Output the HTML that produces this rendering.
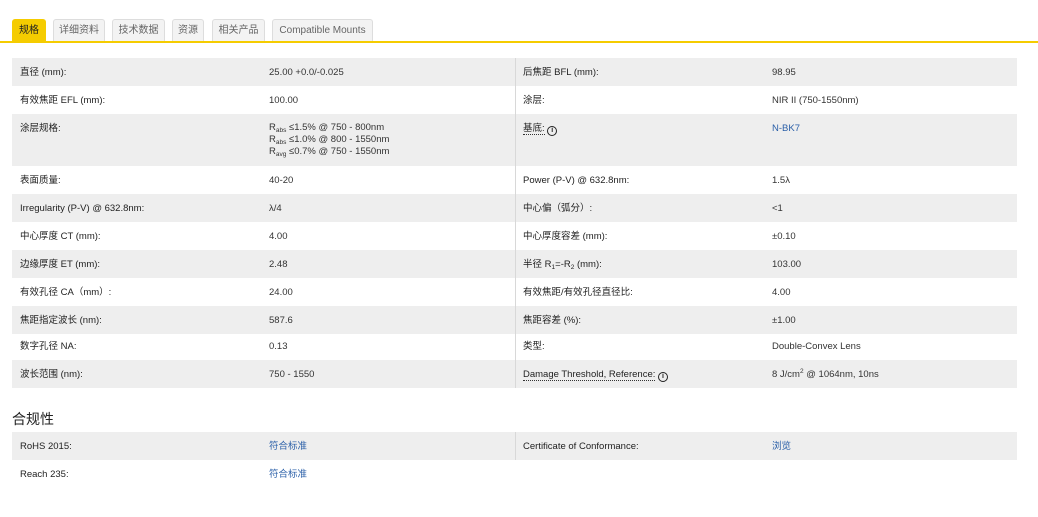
<!DOCTYPE html>
<html><head><meta charset="utf-8"><style>
*{margin:0;padding:0;box-sizing:border-box}
body{width:1038px;height:517px;background:#fff;font-family:"Liberation Sans","Noto Sans CJK SC",sans-serif;font-size:9.5px;color:#333;position:relative;overflow:hidden}
.tab{position:absolute;top:19px;height:23px;border:1px solid #ddd;border-bottom:none;border-radius:3px 3px 0 0;background:#f3f3f3;color:#666;font-size:10px;line-height:22px;text-align:center}
.tab.a{background:#f5cc00;border-color:#f5cc00;color:#222}
.line{position:absolute;left:0;top:41px;width:1038px;height:2px;background:#f5cc00}
.r{position:absolute;left:12px;width:1005px}
.g{background:#eeeeee}
.c{position:absolute;top:9px;line-height:12px;white-space:nowrap}
.l1{left:8px;color:#222}.v1{left:257px}.l2{left:511px;color:#222}.v2{left:760px}
.div{position:absolute;left:515px;width:1px;background:#d8d8d8}
a{color:#2a5fa8;text-decoration:none}
.dot{border-bottom:1px dotted #333}
.i{display:inline-block;width:10px;height:10px;border:1.3px solid #222;border-radius:50%;font-size:7px;line-height:7px;text-align:center;font-weight:bold;vertical-align:-1px;color:#222}
sub,sup{font-size:6.5px;line-height:0;position:relative;vertical-align:baseline}
sub{top:2px}sup{top:-4px}
h3{position:absolute;left:12px;top:409px;font-size:14px;font-weight:normal;color:#222}
</style></head><body>
<div class="tab a" style="left:12px;width:34px">规格</div>
<div class="tab" style="left:53px;width:52px">详细资料</div>
<div class="tab" style="left:112px;width:53px">技术数据</div>
<div class="tab" style="left:172px;width:32px">资源</div>
<div class="tab" style="left:212px;width:53px">相关产品</div>
<div class="tab" style="left:272px;width:101px">Compatible Mounts</div>
<div class="line"></div>

<div class="r g" style="top:58px;height:28px"><span class="c l1">直径 (mm):</span><span class="c v1">25.00 +0.0/-0.025</span><span class="c l2">后焦距 BFL (mm):</span><span class="c v2">98.95</span></div>
<div class="r" style="top:86px;height:28px"><span class="c l1">有效焦距 EFL (mm):</span><span class="c v1">100.00</span><span class="c l2">涂层:</span><span class="c v2">NIR II (750-1550nm)</span></div>
<div class="r g" style="top:114px;height:52px"><span class="c l1">涂层规格:</span><span class="c v1" style="top:8px;line-height:12px">R<sub>abs</sub> ≤1.5% @ 750 - 800nm<br>R<sub>abs</sub> ≤1.0% @ 800 - 1550nm<br>R<sub>avg</sub> ≤0.7% @ 750 - 1550nm</span><span class="c l2"><span class="dot">基底:</span> <span class="i">i</span></span><span class="c v2"><a>N-BK7</a></span></div>
<div class="r" style="top:166px;height:28px"><span class="c l1">表面质量:</span><span class="c v1">40-20</span><span class="c l2">Power (P-V) @ 632.8nm:</span><span class="c v2">1.5λ</span></div>
<div class="r g" style="top:194px;height:28px"><span class="c l1">Irregularity (P-V) @ 632.8nm:</span><span class="c v1">λ/4</span><span class="c l2">中心偏（弧分）:</span><span class="c v2">&lt;1</span></div>
<div class="r" style="top:222px;height:28px"><span class="c l1">中心厚度 CT (mm):</span><span class="c v1">4.00</span><span class="c l2">中心厚度容差 (mm):</span><span class="c v2">±0.10</span></div>
<div class="r g" style="top:250px;height:28px"><span class="c l1">边缘厚度 ET (mm):</span><span class="c v1">2.48</span><span class="c l2">半径 R<sub>1</sub>=-R<sub>2</sub> (mm):</span><span class="c v2">103.00</span></div>
<div class="r" style="top:278px;height:28px"><span class="c l1">有效孔径 CA（mm）:</span><span class="c v1">24.00</span><span class="c l2">有效焦距/有效孔径直径比:</span><span class="c v2">4.00</span></div>
<div class="r g" style="top:306px;height:28px"><span class="c l1">焦距指定波长 (nm):</span><span class="c v1">587.6</span><span class="c l2">焦距容差 (%):</span><span class="c v2">±1.00</span></div>
<div class="r" style="top:334px;height:26px"><span class="c l1" style="top:7px">数字孔径 NA:</span><span class="c v1" style="top:7px">0.13</span><span class="c l2" style="top:7px">类型:</span><span class="c v2" style="top:7px">Double-Convex Lens</span></div>
<div class="r g" style="top:360px;height:28px"><span class="c l1">波长范围 (nm):</span><span class="c v1">750 - 1550</span><span class="c l2"><span class="dot">Damage Threshold, Reference:</span> <span class="i">i</span></span><span class="c v2">8 J/cm<sup>2</sup> @ 1064nm, 10ns</span></div>
<div class="div" style="top:58px;height:330px"></div>

<h3>合规性</h3>
<div class="r g" style="top:432px;height:28px"><span class="c l1">RoHS 2015:</span><span class="c v1"><a>符合标准</a></span><span class="c l2">Certificate of Conformance:</span><span class="c v2"><a>浏览</a></span></div>
<div class="r" style="top:460px;height:28px"><span class="c l1">Reach 235:</span><span class="c v1"><a>符合标准</a></span></div>
<div class="div" style="top:432px;height:28px"></div>
</body></html>
